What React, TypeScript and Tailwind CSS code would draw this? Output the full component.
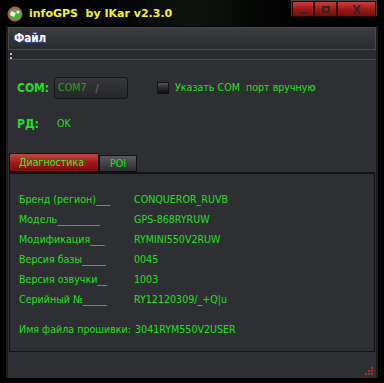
const GREEN = 'text-[#1fe01f]';

const ROWS: [string, string][] = [
  ['Бренд (регион)___', 'CONQUEROR_RUVB'],
  ['Модель_________', 'GPS-868RYRUW'],
  ['Модификация___', 'RYMINI550V2RUW'],
  ['Версия базы_____', '0045'],
  ['Версия озвучки__', '1003'],
  ['Серийный №_____', 'RY12120309/_+Q|u'],
];

function AppIcon() {
  return (
    <svg width="18" height="16" viewBox="0 0 18 16">
      <circle cx="9" cy="8" r="7.5" fill="#c8504a" />
      <circle cx="9.5" cy="8.5" r="6" fill="#4fa84a" />
      <path d="M5 5 L10 7 L8 11 L4 9 Z" fill="#e8f0e0" />
      <circle cx="12" cy="6" r="1.6" fill="#f0f0f0" />
    </svg>
  );
}

function WindowButtons() {
  const btn =
    'flex items-center justify-center h-[16px] border border-[#2a0000] bg-gradient-to-b from-[#c84040] via-[#a01818] to-[#7a0c0c]';
  return (
    <div className="flex h-[17px] ml-auto mr-[7px] border border-[#444] rounded-b-[2px]">
      <div className={`${btn} w-[22px]`}>
        <div className="w-[7px] h-[2px] bg-[#2a2a2a] mt-[8px]" />
      </div>
      <div className={`${btn} w-[23px]`}>
        <div className="w-[8px] h-[7px] border-2 border-[#2a2a2a]" />
      </div>
      <div className={`${btn} w-[39px] text-[#2a2a2a] text-[13px] font-bold leading-none`}>X</div>
    </div>
  );
}

export default function App() {
  return (
    <div className="w-[384px] h-[383px] bg-black font-['DejaVu_Sans_Condensed','DejaVu_Sans',sans-serif] text-[10.6px] overflow-hidden">
      {/* title bar */}
      <div className="flex h-[26px] items-start bg-gradient-to-r from-black via-[#101410] to-black">
        <div className="flex items-center h-[28px] pl-[6px] gap-[5px]">
          <AppIcon />
          <span className="font-['DejaVu_Sans',Verdana,sans-serif] font-bold text-[11px] text-[#f8f800] whitespace-pre">
            infoGPS  by IKar v2.3.0
          </span>
        </div>
        <WindowButtons />
      </div>

      {/* frame */}
      <div className="mx-[6px] h-[352px] border-x-2 border-[#1c1c1e] flex flex-col">
        {/* menu bar */}
        <div className="h-[23px] mt-[1px] flex items-center px-[5px] bg-gradient-to-b from-[#3c3d40] to-[#2a2b2e] border border-[#48494c]">
          <span className="font-bold text-[11.5px] text-white [text-shadow:1px_1px_0_#3050c0]">Файл</span>
        </div>
        {/* tool strip */}
        <div className="h-[10px] bg-[#2a2b2e] border-b border-[#48494c] relative">
          <div className="absolute left-[2px] top-[3px] w-[2px] h-[2px] bg-[#bbb]" />
          <div className="absolute left-[2px] top-[7px] w-[2px] h-[2px] bg-[#bbb]" />
        </div>

        {/* main panel */}
        <div className="flex-1 bg-[#2e2f33] flex flex-col">
          <div className="flex items-center mt-[17px] h-[22px]">
            <span className={`${GREEN} font-bold text-[12px] ml-[9px] w-[37px]`}>COM:</span>
            <div className="w-[74px] h-[22px] rounded-[3px] border border-[#151517] bg-gradient-to-b from-[#36373a] to-[#252629] flex items-center pl-[3px]">
              <span className="text-[#2fa02f]">COM7</span>
              <span className="ml-[9px] text-[#777] text-[10px]">/</span>
            </div>
            <div className="ml-[29px] w-[12px] h-[12px] border border-[#111] bg-gradient-to-b from-[#555] via-[#2a2a2a] to-[#111]" />
            <span className={`${GREEN} ml-[6px] whitespace-pre`}>Указать COM  порт вручную</span>
          </div>

          <div className="flex items-center mt-[17px] h-[16px]">
            <span className={`${GREEN} font-bold text-[12px] ml-[9px] w-[40px]`}>РД:</span>
            <span className={GREEN}>OK</span>
          </div>

          {/* tabs */}
          <div className="flex mt-[21px] ml-[1px] h-[19px] items-end">
            <div className="h-[19px] w-[90px] rounded-t-[2px] border border-[#111] bg-gradient-to-b from-[#c04848] via-[#a01a1a] to-[#7c0c0c] flex items-center pl-[9px]">
              <span className="text-[#30f030]">Диагностика</span>
            </div>
            <div className="h-[17px] w-[38px] border border-[#111] bg-gradient-to-b from-[#5a5b5e] to-[#2c2d30] flex items-center justify-center">
              <span className={GREEN}>POI</span>
            </div>
          </div>
          <div className="mx-[1px] h-[180px] border border-[#121214] border-t-2 bg-[#2e2f33] pt-[16px] pl-[9px]">
            {ROWS.map(([k, v]) => (
              <div key={k} className="flex h-[20px] items-center">
                <span className={`${GREEN} w-[115px] whitespace-pre`}>{k}</span>
                <span className={GREEN}>{v}</span>
              </div>
            ))}
            <div className="flex h-[20px] items-center mt-[10px]">
              <span className={`${GREEN} whitespace-pre`}>Имя файла прошивки:</span>
              <span className={`${GREEN} ml-[4px]`}>3041RYM550V2USER</span>
            </div>
          </div>
          <div className="flex-1 relative">
            <svg className="absolute right-[3px] bottom-[3px]" width="8" height="8" viewBox="0 0 8 8">
              <rect x="6" y="0" width="2" height="2" fill="#d02020" />
              <rect x="6" y="3" width="2" height="2" fill="#d02020" />
              <rect x="3" y="3" width="2" height="2" fill="#d02020" />
              <rect x="6" y="6" width="2" height="2" fill="#d02020" />
              <rect x="3" y="6" width="2" height="2" fill="#d02020" />
              <rect x="0" y="6" width="2" height="2" fill="#d02020" />
            </svg>
          </div>
        </div>
      </div>
    </div>
  );
}
